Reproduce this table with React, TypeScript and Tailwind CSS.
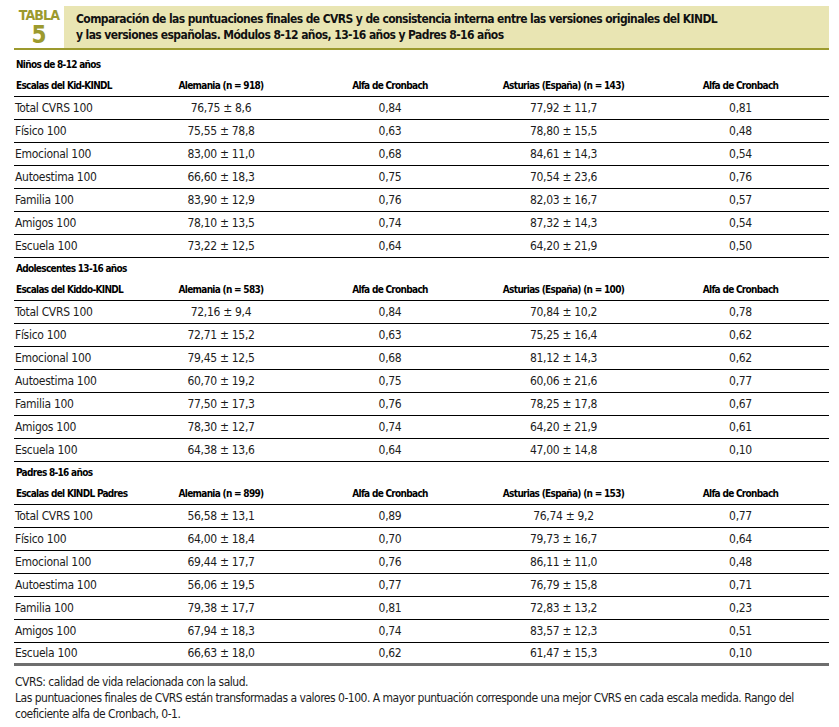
import React from 'react';

const cond = { fontFamily: '"Liberation Sans Narrow", "DejaVu Sans Condensed", "Arial Narrow", sans-serif' };

type Row = [string, string, string, string, string];

interface Section {
  title: string;
  head: Row;
  rows: Row[];
}

const sections: Section[] = [
  {
    title: 'Niños de 8-12 años',
    head: ['Escalas del Kid-KINDL', 'Alemania (n = 918)', 'Alfa de Cronbach', 'Asturias (España) (n = 143)', 'Alfa de Cronbach'],
    rows: [
      ['Total CVRS 100', '76,75 ± 8,6', '0,84', '77,92 ± 11,7', '0,81'],
      ['Físico 100', '75,55 ± 78,8', '0,63', '78,80 ± 15,5', '0,48'],
      ['Emocional 100', '83,00 ± 11,0', '0,68', '84,61 ± 14,3', '0,54'],
      ['Autoestima 100', '66,60 ± 18,3', '0,75', '70,54 ± 23,6', '0,76'],
      ['Familia 100', '83,90 ± 12,9', '0,76', '82,03 ± 16,7', '0,57'],
      ['Amigos 100', '78,10 ± 13,5', '0,74', '87,32 ± 14,3', '0,54'],
      ['Escuela 100', '73,22 ± 12,5', '0,64', '64,20 ± 21,9', '0,50'],
    ],
  },
  {
    title: 'Adolescentes 13-16 años',
    head: ['Escalas del Kiddo-KINDL', 'Alemania (n = 583)', 'Alfa de Cronbach', 'Asturias (España) (n = 100)', 'Alfa de Cronbach'],
    rows: [
      ['Total CVRS 100', '72,16 ± 9,4', '0,84', '70,84 ± 10,2', '0,78'],
      ['Físico 100', '72,71 ± 15,2', '0,63', '75,25 ± 16,4', '0,62'],
      ['Emocional 100', '79,45 ± 12,5', '0,68', '81,12 ± 14,3', '0,62'],
      ['Autoestima 100', '60,70 ± 19,2', '0,75', '60,06 ± 21,6', '0,77'],
      ['Familia 100', '77,50 ± 17,3', '0,76', '78,25 ± 17,8', '0,67'],
      ['Amigos 100', '78,30 ± 12,7', '0,74', '64,20 ± 21,9', '0,61'],
      ['Escuela 100', '64,38 ± 13,6', '0,64', '47,00 ± 14,8', '0,10'],
    ],
  },
  {
    title: 'Padres 8-16 años',
    head: ['Escalas del KINDL Padres', 'Alemania (n = 899)', 'Alfa de Cronbach', 'Asturias (España) (n = 153)', 'Alfa de Cronbach'],
    rows: [
      ['Total CVRS 100', '56,58 ± 13,1', '0,89', '76,74 ± 9,2', '0,77'],
      ['Físico 100', '64,00 ± 18,4', '0,70', '79,73 ± 16,7', '0,64'],
      ['Emocional 100', '69,44 ± 17,7', '0,76', '86,11 ± 11,0', '0,48'],
      ['Autoestima 100', '56,06 ± 19,5', '0,77', '76,79 ± 15,8', '0,71'],
      ['Familia 100', '79,38 ± 17,7', '0,81', '72,83 ± 13,2', '0,23'],
      ['Amigos 100', '67,94 ± 18,3', '0,74', '83,57 ± 12,3', '0,51'],
      ['Escuela 100', '66,63 ± 18,0', '0,62', '61,47 ± 15,3', '0,10'],
    ],
  },
];

const grid = 'grid grid-cols-[123px_168px_170px_177px_177px] items-center';

const TableSection: React.FC<{ section: Section; first: boolean; last: boolean }> = ({ section, first, last }) => (
  <div className={first ? 'pt-[4px]' : ''}>
    <div className="h-[21px] flex items-center pl-[2px] text-[10px] tracking-[-0.7px] font-bold text-black whitespace-nowrap">
      {section.title}
    </div>
    <div className={`${grid} h-[22px] border-b border-black text-[10px] tracking-[-0.7px] font-bold text-black whitespace-nowrap`}>
      {section.head.map((h, i) => (
        <div key={i} className={i === 0 ? 'pl-[2px]' : 'text-center'}>
          {h}
        </div>
      ))}
    </div>
    {section.rows.map((r, ri) => {
      const isLast = ri === section.rows.length - 1;
      const border = isLast && last ? 'border-b-[3px] border-[#6e6e6e]' : 'border-b border-black';
      return (
        <div key={ri} className={`${grid} h-[23px] ${border} text-[12px] tracking-[-0.3px] text-[#1c1c1c] whitespace-nowrap`}>
          {r.map((c, i) => (
            <div key={i} className={i === 0 ? 'pl-[1px]' : 'text-center'}>
              {c}
            </div>
          ))}
        </div>
      );
    })}
  </div>
);

export default function App() {
  return (
    <div className="w-[839px] h-[727px] bg-white pt-[6px] pl-[14px] pr-[10px]" style={cond}>
      <div className="flex border-b-2 border-[#9c9a2e]">
        <div className="w-[50px] flex flex-col items-center text-[#9c9a2e] font-bold leading-none pt-[2px]">
          <span className="text-[14px] tracking-[-0.8px]">TABLA</span>
          <span className="text-[24px] mt-[1px]">5</span>
        </div>
        <div className="flex-1 h-[42px] bg-[#e9e5b3] pl-[12px] flex flex-col justify-center text-[12px] tracking-[-0.6px] font-bold leading-[16px] text-[#111] whitespace-nowrap">
          <div>Comparación de las puntuaciones finales de CVRS y de consistencia interna entre las versiones originales del KINDL</div>
          <div>y las versiones españolas. Módulos 8-12 años, 13-16 años y Padres 8-16 años</div>
        </div>
      </div>
      <div>
        {sections.map((s, i) => (
          <TableSection key={i} section={s} first={i === 0} last={i === sections.length - 1} />
        ))}
      </div>
      <div className="pt-[8px] pl-[1px] text-[12px] tracking-[-0.5px] leading-[16px] text-[#1c1c1c]">
        <div>CVRS: calidad de vida relacionada con la salud.</div>
        <div>
          Las puntuaciones finales de CVRS están transformadas a valores 0-100. A mayor puntuación corresponde una mejor CVRS en cada escala medida. Rango del
          <br />
          coeficiente alfa de Cronbach, 0-1.
        </div>
      </div>
    </div>
  );
}
